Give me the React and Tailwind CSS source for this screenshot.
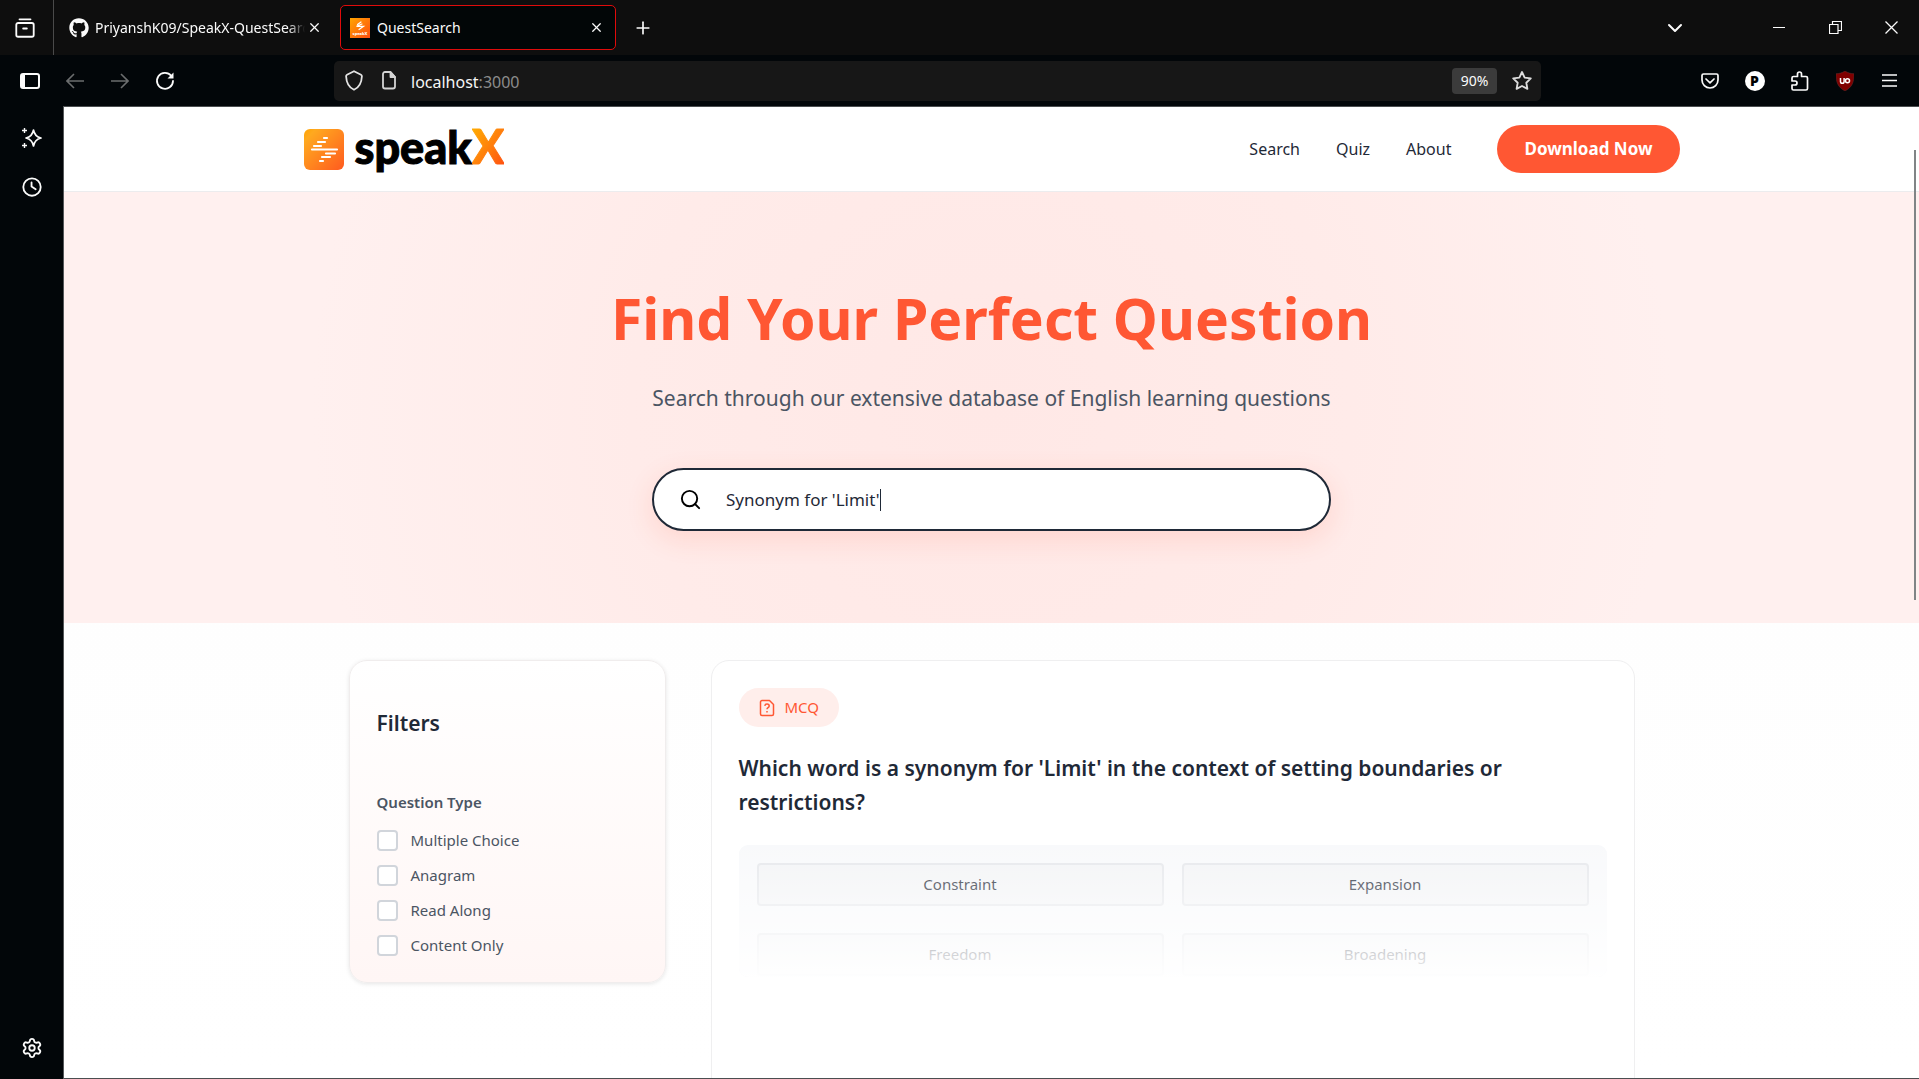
import { useState } from "react";
import { Settings, X, Plus, ChevronDown } from "lucide-react";
import { FaGithub } from "react-icons/fa";

function Icon({ size = 22, width = 2, className = "", children }) {
  return (
    <svg
      width={size}
      height={size}
      viewBox="0 0 24 24"
      fill="none"
      stroke="currentColor"
      strokeWidth={width}
      strokeLinecap="round"
      strokeLinejoin="round"
      className={className}
      aria-hidden="true"
    >
      {children}
    </svg>
  );
}

function IconButton({ label, className = "w-[45px]", children }) {
  return (
    <button type="button" aria-label={label} className={`flex h-10 shrink-0 items-center justify-center ${className}`}>
      {children}
    </button>
  );
}

function Favicon() {
  return (
    <svg width="20" height="20" viewBox="0 0 20 20" aria-hidden="true" className="shrink-0">
      <defs>
        <linearGradient id="favicon-fill" x1="0" y1="0" x2="1" y2="1">
          <stop offset="0" stopColor="#ffa500" />
          <stop offset="1" stopColor="#ff4d10" />
        </linearGradient>
      </defs>
      <rect width="20" height="20" fill="url(#favicon-fill)" />
      <path d="M11 4 7.500 6.500M12 6 6.500 8.300H13.500L9 11.500" stroke="#fff" strokeWidth="1.2" fill="none" strokeLinecap="round" />
      <text x="10" y="17" textAnchor="middle" fontSize="4" fontWeight="800" fill="#fff" fontFamily="Noto Sans, sans-serif">
        speakX
      </text>
    </svg>
  );
}

function TabBar() {
  return (
    <div className="flex h-[55px] shrink-0 items-center bg-[#0e0e0e]">
      <div className="flex h-full w-[54px] items-center border-r border-[#4a4a4a]">
        <IconButton label="Tab overview" className="w-[49px]">
          <Icon size={22} width={2}>
            <path d="M6 2.500h12M4.500 6.500h15a2 2 0 0 1 2 2v11a2 2 0 0 1-2 2h-15a2 2 0 0 1-2-2v-11a2 2 0 0 1 2-2z" />
            <path d="M10 12.500h4" />
          </Icon>
        </IconButton>
      </div>
      <div className="flex w-[286px] items-center pl-[15px]">
        <FaGithub size={20} className="shrink-0" />
        <span className="ml-[6px] w-[210px] overflow-hidden whitespace-nowrap text-sm [mask-image:linear-gradient(to_right,#000_92%,transparent)]">
          PriyanshK09/SpeakX-QuestSearch
        </span>
        <button type="button" aria-label="Close tab" className="flex w-[18px] justify-center">
          <X size={15} strokeWidth={2} />
        </button>
      </div>
      <div className="flex h-[45px] w-[276px] items-center rounded-[5px] border border-[#e00b0b] bg-[#020607] pl-[9px] pr-[11px]">
        <Favicon />
        <span className="ml-[7px] flex-1 text-sm">QuestSearch</span>
        <button type="button" aria-label="Close tab">
          <X size={15} strokeWidth={2} />
        </button>
      </div>
      <IconButton label="New tab" className="w-[54px]">
        <Plus size={20} strokeWidth={2} />
      </IconButton>
      <div className="ml-auto flex items-center">
        <IconButton label="List all tabs" className="mr-[48px] w-[56px]">
          <ChevronDown size={24} strokeWidth={2} />
        </IconButton>
        <IconButton label="Minimize" className="w-[56px]">
          <svg width="12" height="12" viewBox="0 0 12 12" stroke="currentColor" aria-hidden="true">
            <path d="M0 5.500h12" />
          </svg>
        </IconButton>
        <IconButton label="Restore" className="w-[56px]">
          <svg width="13" height="13" viewBox="0 0 13 13" fill="none" stroke="currentColor" strokeWidth="1.200" aria-hidden="true">
            <path d="M.5 3.500h8.500v9h-8.500zM3.500 3.500v-3h9v9h-3.500" />
          </svg>
        </IconButton>
        <IconButton label="Close window" className="w-[56px]">
          <svg width="13" height="13" viewBox="0 0 13 13" stroke="currentColor" strokeWidth="1.300" aria-hidden="true">
            <path d="M.5.5l12 12M12.500.5l-12 12" />
          </svg>
        </IconButton>
      </div>
    </div>
  );
}

function Toolbar() {
  return (
    <div className="flex h-[51px] shrink-0 items-center bg-[#020609]">
      <div className="flex w-[334px] items-center pl-[7px]">
        <IconButton label="Toggle sidebar">
          <svg width="20" height="16" viewBox="0 0 20 16" fill="none" stroke="currentColor" strokeWidth="2" aria-hidden="true">
            <rect x="1" y="1" width="18" height="14" rx="2" />
            <path d="M1 3v10a2 2 0 0 0 2 2h2V1H3a2 2 0 0 0-2 2z" fill="currentColor" stroke="none" />
          </svg>
        </IconButton>
        <IconButton label="Back">
          <svg width="18" height="16" viewBox="0 0 18 16" fill="none" stroke="#6b6d6e" strokeWidth="1.600" aria-hidden="true">
            <path d="M18 8H1M8 1 1 8l7 7" />
          </svg>
        </IconButton>
        <IconButton label="Forward">
          <svg width="18" height="16" viewBox="0 0 18 16" fill="none" stroke="#6b6d6e" strokeWidth="1.600" aria-hidden="true">
            <path d="M0 8h17M10 1l7 7-7 7" />
          </svg>
        </IconButton>
        <IconButton label="Reload">
          <svg width="20" height="20" viewBox="0 0 20 20" fill="none" stroke="currentColor" strokeWidth="1.800" aria-hidden="true">
            <path d="M16.200 4.800A8 8 0 1 0 18 10" strokeLinecap="round" />
            <path d="M18.500 1.500v6h-6z" fill="currentColor" stroke="none" />
          </svg>
        </IconButton>
      </div>
      <div className="flex h-10 flex-1 items-center rounded-[5px] bg-[#171717] pl-[10px] pr-[8px]">
        <svg width="20" height="21" viewBox="0 0 20 21" fill="none" stroke="#e4e4e4" strokeWidth="1.800" strokeLinejoin="round" aria-hidden="true">
          <path d="M10 1.200 17 4.800c.6.300.9.800.9 1.400C17.600 13 15 17.500 10 19.800 5 17.500 2.400 13 2.100 6.200c0-.6.300-1.100.9-1.400z" />
        </svg>
        <svg width="14" height="19" viewBox="0 0 14 19" fill="none" stroke="#d4d4d4" strokeWidth="1.800" strokeLinejoin="round" className="ml-[18px]" aria-hidden="true">
          <path d="M8.500 1H3a2 2 0 0 0-2 2v12.500a2 2 0 0 0 2 2h8a2 2 0 0 0 2-2V6z" />
          <path d="M8.500 1v5H13z" fill="#d4d4d4" />
        </svg>
        <span className="ml-[15px] flex-1 pt-0.5 text-base text-[#8c8c8c]">
          <span className="text-[#f5f5f5]">localhost</span>:3000
        </span>
        <button type="button" className="h-[26px] w-[45px] rounded-[4px] bg-[#3b3b3b] text-sm">
          90%
        </button>
        <button type="button" aria-label="Bookmark this page" className="ml-[14px]">
          <Icon size={22} width={2} className="text-[#dcdcdc]">
            <path d="M12 2.200l2.900 6.100 6.700.9-4.900 4.700 1.200 6.700L12 17.400l-5.900 3.200 1.200-6.700-4.900-4.700 6.700-.9z" />
          </Icon>
        </button>
      </div>
      <div className="flex w-[378px] items-center justify-end pr-[7px]">
        <IconButton label="Pocket">
          <svg width="18" height="16" viewBox="0 0 18 16" fill="none" stroke="currentColor" strokeWidth="1.700" strokeLinecap="round" strokeLinejoin="round" aria-hidden="true">
            <path d="M2.500 1h13A1.500 1.500 0 0 1 17 2.500V7A8 8 0 0 1 1 7V2.500A1.500 1.500 0 0 1 2.500 1z" />
            <path d="M5 6l4 3.800L13 6" />
          </svg>
        </IconButton>
        <IconButton label="Profile">
          <span className="flex h-5 w-5 items-center justify-center rounded-full bg-white text-sm font-black text-black">P</span>
        </IconButton>
        <IconButton label="Extensions">
          <svg width="18" height="20" viewBox="0 0 18 20" fill="none" stroke="currentColor" strokeWidth="1.700" strokeLinejoin="round" aria-hidden="true">
            <path d="M2.500 5.500h4V3a2 2 0 0 1 4 0v2.500h4.500a1.500 1.500 0 0 1 1.500 1.500v10.500a1.500 1.500 0 0 1-1.500 1.500H2.500A1.500 1.500 0 0 1 1 17.500V14h3a2 2 0 0 0 0-4H1V7a1.500 1.500 0 0 1 1.500-1.500z" />
          </svg>
        </IconButton>
        <IconButton label="uBlock Origin">
          <svg width="18" height="20" viewBox="0 0 18 20" aria-hidden="true">
            <path d="M9 0c3 2 6 2.700 9 2.700C18 11 16.500 16 9 20 1.500 16 0 11 0 2.700 3 2.700 6 2 9 0z" fill="#800000" stroke="#5f3030" strokeWidth=".5" />
            <path d="M4.500 7v3.500a1.800 1.800 0 0 0 3.600 0V7M8.100 10.500V7" fill="none" stroke="#fff" strokeWidth="1.500" />
            <circle cx="11.500" cy="9.800" r="2" fill="none" stroke="#fff" strokeWidth="1.500" />
          </svg>
        </IconButton>
        <IconButton label="Menu">
          <svg width="15" height="13" viewBox="0 0 15 13" stroke="currentColor" strokeWidth="1.500" aria-hidden="true">
            <path d="M0 1h15M0 6.500h15M0 12h15" />
          </svg>
        </IconButton>
      </div>
    </div>
  );
}

function Sidebar() {
  return (
    <aside className="flex w-[64px] shrink-0 flex-col items-center gap-[9px] border-r border-[#55585a] bg-[#020609] pb-[11px] pt-[12px]">
      <IconButton label="AI chatbot">
        <svg width="20" height="20" viewBox="0 0 20 20" fill="none" stroke="currentColor" strokeWidth="1.700" strokeLinejoin="round" aria-hidden="true">
          <path d="M11.500 2c.8 4.500 2.500 6.900 7.500 8-5 1.100-6.700 3.500-7.500 8-.8-4.500-2.500-6.900-7.500-8 5-1.100 6.700-3.500 7.500-8z" />
          <path d="M2.500 0v5M0 2.500h5M2.500 15v5M0 17.500h5" strokeWidth="1.400" />
        </svg>
      </IconButton>
      <IconButton label="History">
        <Icon size={22}>
          <circle cx="12" cy="12" r="9.500" />
          <path d="M11.500 7v4.500l4.500 3" />
        </Icon>
      </IconButton>
      <IconButton label="Customize sidebar" className="mt-auto w-[45px]">
        <Settings size={22} strokeWidth={2} />
      </IconButton>
    </aside>
  );
}

function Logo() {
  return (
    <a href="#home" aria-label="speakX" className="flex items-center gap-[10px]">
      <svg width="41" height="41" viewBox="0 0 41 41" aria-hidden="true">
        <defs>
          <linearGradient id="logo-fill" x1="0" y1="0" x2="1" y2="1">
            <stop offset="0" stopColor="#ffa400" />
            <stop offset=".15" stopColor="#ffa91f" />
            <stop offset="1" stopColor="#ff5a1f" />
          </linearGradient>
        </defs>
        <rect width="40" height="41" rx="6" fill="url(#logo-fill)" />
        <path
          d="M20 9h3M14 13h7M10 17h7M8 20.500h25M22 24.500h9M18 28h8M16 32h3"
          stroke="#fff"
          strokeWidth="2.200"
          strokeLinecap="round"
        />
      </svg>
      <span className="flex items-baseline pb-[6px] font-[Lato] text-[45px] font-black leading-[44px] text-black">
        <span className="[-webkit-text-stroke:1px_black]">speak</span>
        <span className="bg-linear-to-br from-[#ffb000] to-[#ff4a10] bg-clip-text text-5xl leading-[44px] text-transparent [-webkit-text-stroke:1px_transparent]">
          X
        </span>
      </span>
    </a>
  );
}

function SiteHeader() {
  return (
    <header className="h-[85px] shrink-0 border-b border-[#ececee] bg-white">
      <div className="mx-auto flex h-full max-w-[1376px] items-center justify-between">
        <Logo />
        <nav className="flex items-center gap-9 text-base text-[#1f2937]">
          <a href="#search">Search</a>
          <a href="#quiz">Quiz</a>
          <a href="#about">About</a>
          <button type="button" className="ml-[10px] h-12 rounded-full bg-[#ff5733] px-[27px] text-[17px] font-bold text-white">
            Download Now
          </button>
        </nav>
      </div>
    </header>
  );
}

function Hero({ query, onQuery }) {
  return (
    <section className="flex shrink-0 flex-col items-center bg-[#fff0ee] bg-[radial-gradient(circle_at_center,#ffe8e6_0,#ffebe9_360px,#fff0ef_680px)] pb-[92px] pt-[90px]">
      <h1 className="text-[57px] font-bold leading-[72px] text-[#ff5733]">Find Your Perfect Question</h1>
      <p className="mt-7 text-[21px] leading-8 text-[#4b5563]">
        Search through our extensive database of English learning questions
      </p>
      <label className="mt-[54px] flex h-[63px] w-full max-w-[679px] items-center rounded-full border-2 border-[#1f2937] bg-white pl-[25px] shadow-[0_8px_28px_rgba(255,87,51,0.14)]">
        <Icon size={23} width={2} className="text-black">
          <circle cx="11" cy="11" r="8" />
          <path d="m21 21-4.300-4.300" />
        </Icon>
        <input
          type="text"
          aria-label="Search questions"
          value={query}
          onChange={(e) => onQuery(e.target.value)}
          className="ml-[24px] field-sizing-content text-[17px] text-[#1f2937] caret-transparent outline-none"
        />
        <span className="h-[22px] w-px bg-[#1f2937]" />
      </label>
    </section>
  );
}

const types = ["Multiple Choice", "Anagram", "Read Along", "Content Only"];

function Filters() {
  return (
    <aside className="w-[317px] shrink-0 rounded-[18px] border border-[#f0eded] bg-linear-to-b from-white to-[#fff6f5] px-[27px] pb-[26px] pt-12 shadow-[0_1px_4px_rgba(0,0,0,0.1)]">
      <h2 className="text-[21px] font-semibold leading-7 text-[#1f2937]">Filters</h2>
      <fieldset className="mt-[54px]">
        <legend className="text-[15px] font-semibold leading-[22px] text-[#4b5563]">Question Type</legend>
        <div className="mt-4 flex flex-col gap-[13px]">
          {types.map((type) => (
            <label key={type} className="flex h-[22px] items-center gap-[13px] text-[15px] text-[#4b5563]">
              <input
                type="checkbox"
                className="h-[21px] w-[21px] appearance-none rounded-[4px] border-2 border-[#d1d5db] bg-white checked:bg-[#ff5733]"
              />
              {type}
            </label>
          ))}
        </div>
      </fieldset>
    </aside>
  );
}

const options = ["Constraint", "Expansion", "Freedom", "Broadening"];

function QuestionCard() {
  return (
    <article className="min-w-0 flex-1 rounded-[18px] border border-[#efeff0] bg-white p-[27px]">
      <div className="flex h-[39px] w-[100px] items-center rounded-full bg-[#ffeeeb] pl-5 text-[15px] text-[#ff5733]">
        <svg width="16" height="18" viewBox="0 0 16 18" fill="none" stroke="currentColor" strokeWidth="1.500" strokeLinejoin="round" aria-hidden="true">
          <path d="M10.500 1.500H3A1.500 1.500 0 0 0 1.500 3v12A1.500 1.500 0 0 0 3 16.500h10a1.500 1.500 0 0 0 1.500-1.500V5.500z" />
          <path d="M5.800 6.800c.2-1.200 1-1.700 2.200-1.700s2.200.7 2.200 1.900c0 1.600-2.200 1.700-2.200 3.200M8 12v1.400" />
        </svg>
        <span className="ml-[10px]">MCQ</span>
      </div>
      <h3 className="mt-6 text-[21px] font-semibold leading-[34px] text-[#1f2937]">
        Which word is a synonym for 'Limit' in the context of setting boundaries or restrictions?
      </h3>
      <div className="relative mt-[26px] h-[132px] overflow-hidden rounded-[9px] bg-[#f8f9fb] p-[18px]">
        <div className="grid grid-cols-2 gap-x-[18px] gap-y-[27px]">
          {options.map((option) => (
            <button
              key={option}
              type="button"
              className="h-[43px] rounded-[4px] border-2 border-[#e5e7eb] bg-[#f3f4f6] text-[15px] text-[#1f2937]"
            >
              {option}
            </button>
          ))}
        </div>
        <div className="pointer-events-none absolute inset-0 bg-linear-to-b from-white/5 to-white/95" />
      </div>
    </article>
  );
}

export default function App() {
  const [query, setQuery] = useState("Synonym for 'Limit'");
  return (
    <div className="flex h-screen flex-col overflow-hidden bg-[#020609] font-['Noto_Sans',sans-serif] text-[#fbfbfb]">
      <TabBar />
      <Toolbar />
      <div className="flex min-h-0 flex-1">
        <Sidebar />
        <div className="relative flex min-w-0 flex-1 flex-col overflow-hidden border-y border-[#4b4e50] bg-linear-to-b from-[#fdfdfd] to-white">
          <SiteHeader />
          <Hero query={query} onQuery={setQuery} />
          <main className="mx-auto flex w-full max-w-[1286px] flex-1 items-start gap-[45px] pt-[37px]">
            <Filters />
            <div className="-mb-8 flex min-w-0 flex-1 self-stretch">
              <QuestionCard />
            </div>
          </main>
          <div className="absolute right-[3px] top-[43px] h-[450px] w-[2px] bg-[#808486]" />
        </div>
      </div>
    </div>
  );
}
